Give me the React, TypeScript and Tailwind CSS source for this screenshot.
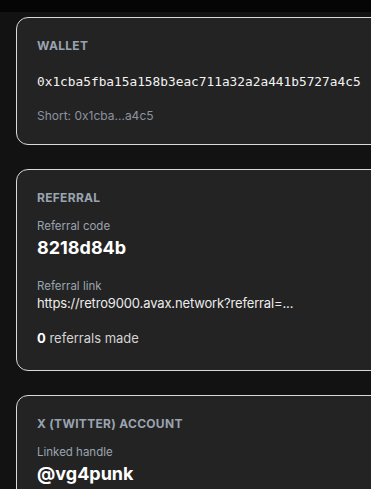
export default function App() {
  return (
    <div
      className="h-[489px] w-[371px] overflow-hidden bg-[#121212] text-white"
      style={{ fontFamily: "Inter, 'Noto Sans', sans-serif" }}
    >
      <div className="h-3 bg-[#050505]" />

      <div className="flex w-[420px] flex-col gap-6 px-4 pt-[5px]">
        {/* Wallet */}
        <section className="rounded-xl border border-[#d9d9d9] bg-[#232323] p-5">
          <h3 className="text-xs font-bold uppercase leading-4 tracking-wide text-[#9aa3b0]">
            Wallet
          </h3>
          <p
            className="mt-4 text-[12.8px] font-medium leading-6 text-[#f2f2f2]"
            style={{ fontFamily: "'DejaVu Sans Mono', monospace" }}
          >
            0x1cba5fba15a158b3eac711a32a2a441b5727a4c5
          </p>
          <p className="mt-3.5 text-xs leading-4 text-[#8b93a0]">
            Short: 0x1cba...a4c5
          </p>
        </section>

        {/* Referral */}
        <section className="rounded-xl border border-[#d9d9d9] bg-[#232323] p-5">
          <h3 className="text-xs font-bold uppercase leading-4 tracking-wide text-[#9aa3b0]">
            Referral
          </h3>
          <div className="mt-3">
            <p className="text-[11.5px] leading-4 text-[#9aa3b0]">Referral code</p>
            <p className="text-lg font-bold leading-7">8218d84b</p>
          </div>
          <div className="mt-4">
            <p className="text-[11.5px] leading-4 text-[#9aa3b0]">Referral link</p>
            <p className="text-[13px] leading-[18px] tracking-[-0.15px] text-[#ececec]">
              https://retro9000.avax.network?referral=...
            </p>
          </div>
          <p className="mt-3.5 text-[13px] leading-6 text-[#d4d4d4]">
            <span className="font-bold text-white">0</span> referrals made
          </p>
        </section>

        {/* Twitter */}
        <section className="rounded-xl border border-[#d9d9d9] bg-[#232323] p-5">
          <h3 className="text-xs font-bold uppercase leading-4 tracking-wide text-[#9aa3b0]">
            X (Twitter) account
          </h3>
          <div className="mt-3">
            <p className="text-[11.5px] leading-4 text-[#9aa3b0]">Linked handle</p>
            <p className="text-lg font-bold leading-7">@vg4punk</p>
          </div>
        </section>
      </div>
    </div>
  );
}
